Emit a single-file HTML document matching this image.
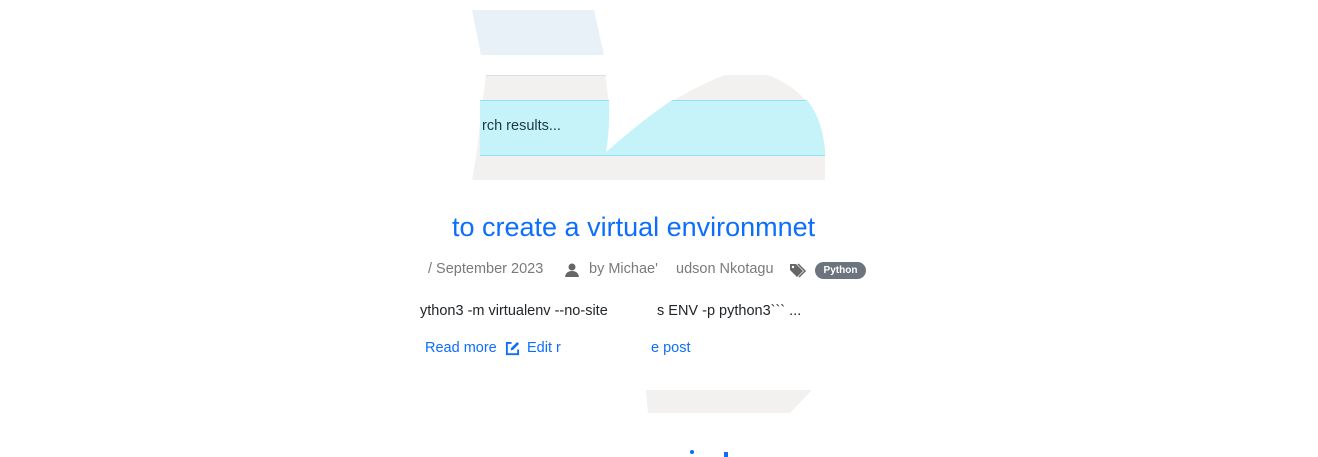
<!DOCTYPE html>
<html><head><meta charset="utf-8"><style>
body{margin:0;width:1318px;height:457px;background:#fff;position:relative;overflow:hidden;font-family:"Liberation Sans",sans-serif}
.t{position:absolute;white-space:nowrap}
.m{color:#7a7a7a;font-size:14.5px;top:261px}
.e{color:#212529;font-size:14.5px;top:303px}
.l{color:#0d6efd;font-size:14.5px;top:340px}
</style></head><body>
<svg width="1318" height="457" style="position:absolute;left:0;top:0">
<polygon points="472,10 594,10 604,55 481,55" fill="#e8f0f8"/>
<path d="M486,75 L605,75 Q612,110 605,155 L605,155 Q660,100 725,75 L768,75 Q820,95 825,150 L825,180 L472,180 Q478,150 480,120 Q484,90 486,75 Z" fill="#f2f1f0"/>
<path d="M480,100 L609,100 Q610,130 606,152 Q640,122 672,100 L807,100 Q822,118 825,150 L825,155 L480,155 Z" fill="#c6f3fa"/>
<line x1="480" y1="100.5" x2="609" y2="100.5" stroke="#8fe3f0"/>
<line x1="672" y1="100.5" x2="806" y2="100.5" stroke="#8fe3f0"/>
<line x1="480" y1="155.5" x2="825" y2="155.5" stroke="#8fe3f0"/>
<line x1="486" y1="75.5" x2="606" y2="75.5" stroke="#dde"/>
<polygon points="646,390 812,390 790,413 648,413" fill="#f2f1f0"/>
</svg>
<div class="t" style="left:482px;top:118px;font-size:14.5px;color:#1a3a40">rch results...</div>
<div class="t" style="left:452px;top:212px;font-size:27px;color:#0d6efd">to create a virtual environmnet</div>
<div class="t m" style="left:428px">/ September 2023</div>
<svg width="16" height="16" style="position:absolute;left:564px;top:262px" viewBox="0 0 16 16"><circle cx="8" cy="5" r="3.5" fill="#666"/><path d="M1,15 Q2,9 8,9 Q14,9 15,15 Z" fill="#666"/></svg>
<div class="t m" style="left:589px">by Michae'</div>
<div class="t m" style="left:676px">udson Nkotagu</div>
<svg width="18" height="16" style="position:absolute;left:789px;top:263px" viewBox="0 0 18 16"><path d="M1,1 L7,1 L14,8 L8,14 L1,7 Z" fill="#666"/><circle cx="4" cy="4" r="1.2" fill="#fff"/><path d="M9,1 L16,8 L10,14" stroke="#666" stroke-width="1.5" fill="none"/></svg>
<div class="t" style="left:815px;top:262px;width:51px;height:17px;border-radius:9px;background:#6c757d;color:#fff;font-size:10px;font-weight:bold;text-align:center;line-height:17px">Python</div>
<div class="t e" style="left:420px">ython3 -m virtualenv --no-site</div>
<div class="t e" style="left:657px">s ENV -p python3&#96;&#96;&#96; ...</div>
<div class="t l" style="left:425px">Read more</div>
<svg width="15" height="15" style="position:absolute;left:505px;top:341px" viewBox="0 0 16 16"><path d="M7,2 L2,2 L2,14 L14,14 L14,9" stroke="#0d6efd" stroke-width="2" fill="none"/><path d="M6,10 L6.5,7.5 L13,1 L15,3 L8.5,9.5 Z" fill="#0d6efd"/></svg>
<div class="t l" style="left:527px">Edit r</div>
<div class="t l" style="left:651px">e post</div>
<div class="t" style="left:690px;top:450px;width:4px;height:4px;border-radius:2px;background:#0d6efd"></div>
<div class="t" style="left:724px;top:452px;width:4px;height:5px;background:#0d6efd"></div>
</body></html>
